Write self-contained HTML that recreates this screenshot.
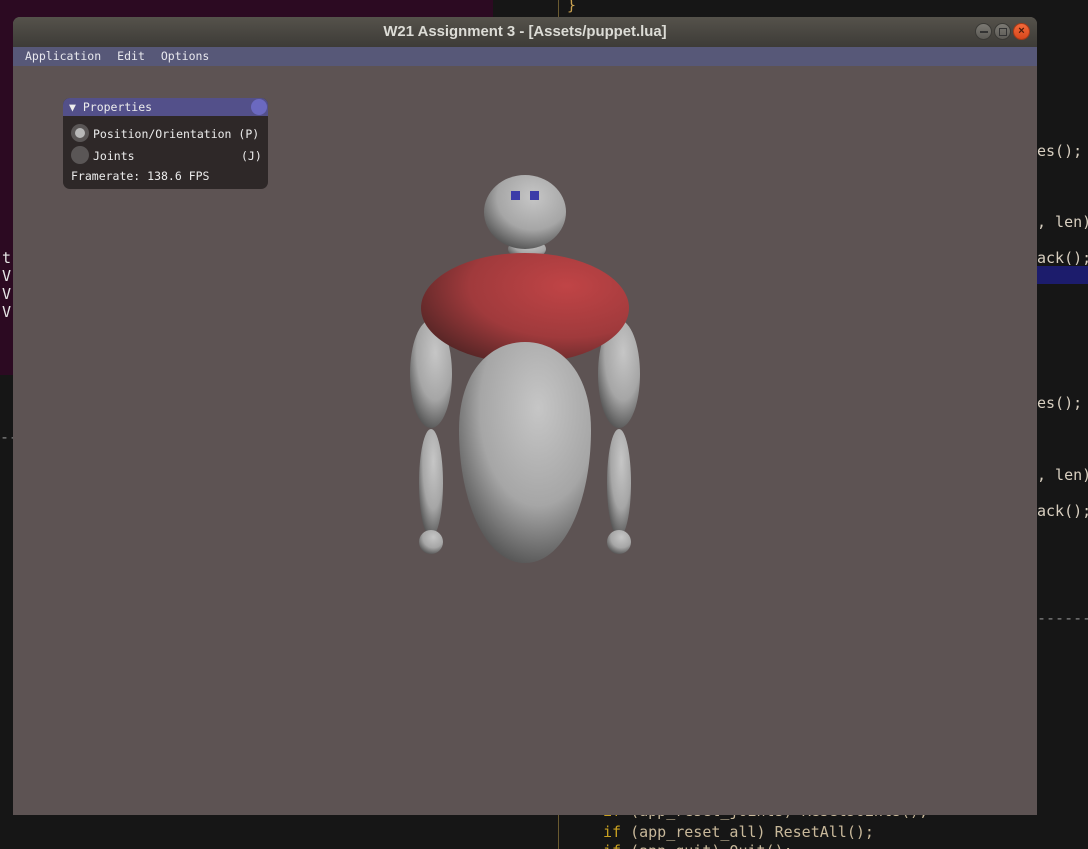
<!DOCTYPE html>
<html><head><meta charset="utf-8">
<style>
*{margin:0;padding:0;box-sizing:border-box}
html,body{width:1088px;height:849px;overflow:hidden}
body{background:#161616;position:relative;font-family:"DejaVu Sans Mono","Liberation Mono",monospace}
.term{position:absolute;left:0;top:0;width:493px;height:375px;background:#2c0a22}
.code{position:absolute;color:#d8cfc0;font-size:15px;white-space:pre;font-family:"DejaVu Sans Mono",monospace}
.win{position:absolute;left:13px;top:17px;width:1024px;height:798px;background:#5d5353;border-radius:7px 7px 0 0;overflow:hidden}
.title{height:30px;background:linear-gradient(#55524b,#3d3b37);color:#dcdcd6;font:bold 14.9px "Liberation Sans",sans-serif;text-align:center;line-height:30px}
.menu{height:19px;background:#575878;color:#e8e8ee;font-size:11.5px;line-height:19px;padding-left:12px}
.menu span{margin-right:16px}
.btn{position:absolute;top:6px;width:17px;height:17px;border-radius:50%;background:linear-gradient(#7b7973,#5c5a55);border:1px solid #3a3935}
.panel{position:absolute;left:50px;top:81px;width:205px;height:91px;background:#2e2828;border-radius:7px;overflow:hidden;color:#ececec;font-size:11.5px}
.ph{height:18px;background:#53508a;line-height:18px;padding-left:6px}
.radio{position:absolute;left:8px;width:18px;height:18px;border-radius:50%;background:#5a5656}
</style></head><body>
<div class="term"></div>
<div class="code" style="left:2px;top:249px;line-height:18px;color:#e6e6e6">t
V
V
V</div>
<div class="code" style="left:0;top:428px;color:#888">--</div>
<div style="position:absolute;left:558px;top:0;width:1px;height:17px;background:#6a5a30"></div>
<div class="code" style="left:567px;top:-4px;color:#c8a050">}</div>
<div class="code" style="left:1037px;top:142px">es();</div>
<div class="code" style="left:1037px;top:213px">, len)</div>
<div style="position:absolute;left:1037px;top:266px;width:51px;height:18px;background:#1c1c6c"></div>
<div class="code" style="left:1037px;top:249px">ack();</div>
<div class="code" style="left:1037px;top:394px">es();</div>
<div class="code" style="left:1037px;top:466px">, len)</div>
<div class="code" style="left:1037px;top:502px">ack();</div>
<div class="code" style="left:1037px;top:609px;color:#888">------</div>
<div style="position:absolute;left:558px;top:815px;width:1px;height:34px;background:#6a5a30"></div>
<div class="code" style="left:603px;top:802px;color:#c8b89a"><span style="color:#c8a020">if</span> (app_reset_joints) ResetJoints();</div>
<div class="code" style="left:603px;top:823px;color:#c8b89a"><span style="color:#c8a020">if</span> (app_reset_all) ResetAll();</div>
<div class="code" style="left:603px;top:842px;color:#c8b89a"><span style="color:#c8a020">if</span> (app_quit) Quit();</div>

<div class="win">
 <div class="title">W21 Assignment 3 - [Assets/puppet.lua]</div>
 <div class="btn" style="left:962px"><div style="position:absolute;left:4px;top:7px;width:8px;height:1.5px;background:#333"></div></div>
 <div class="btn" style="left:981px"><div style="position:absolute;left:4px;top:4px;width:8px;height:8px;border:1.5px solid #333"></div></div>
 <div class="btn" style="left:1000px;background:linear-gradient(#f26a3a,#d9471c);border-color:#a83a18;color:#4a1a0a;font:bold 11px 'Liberation Sans',sans-serif;text-align:center;line-height:15px">×</div>
 <div class="menu"><span>Application</span><span>Edit</span><span>Options</span></div>
 <div class="panel">
  <div class="ph">▼ Properties</div>
  <div style="position:absolute;right:1px;top:1px;width:16px;height:16px;border-radius:50%;background:#6b69c0"></div>
  <div class="radio" style="top:26px"><div style="margin:4px;width:10px;height:10px;border-radius:50%;background:#b8b8b8"></div></div>
  <div style="position:absolute;left:30px;top:29px">Position/Orientation (P)</div>
  <div class="radio" style="top:48px"></div>
  <div style="position:absolute;left:30px;top:51px">Joints</div>
  <div style="position:absolute;left:178px;top:51px">(J)</div>
  <div style="position:absolute;left:8px;top:71px">Framerate: 138.6 FPS</div>
 </div>
</div>

<svg style="position:absolute;left:0;top:0" width="1088" height="849">
<defs>
<radialGradient id="g" cx="0.6" cy="0.3" r="0.8"><stop offset="0" stop-color="#c6c6c6"/><stop offset="0.55" stop-color="#a6a6a6"/><stop offset="1" stop-color="#404040"/></radialGradient>
<radialGradient id="r" cx="0.7" cy="0.3" r="0.85"><stop offset="0" stop-color="#c04446"/><stop offset="0.55" stop-color="#a03a3c"/><stop offset="1" stop-color="#4a2222"/></radialGradient>
</defs>
<ellipse cx="431" cy="483" rx="12" ry="54" fill="url(#g)"/>
<ellipse cx="619" cy="483" rx="12" ry="54" fill="url(#g)"/>
<circle cx="431" cy="542" r="12" fill="url(#g)"/>
<circle cx="619" cy="542" r="12" fill="url(#g)"/>
<ellipse cx="431" cy="374" rx="21" ry="54" fill="url(#g)"/>
<ellipse cx="619" cy="374" rx="21" ry="54" fill="url(#g)"/>
<ellipse cx="527" cy="249" rx="19" ry="10" fill="url(#g)"/>
<ellipse cx="525" cy="308" rx="104" ry="55" fill="url(#r)"/>
<path d="M459 430 C459 372 490 342 525 342 C560 342 591 372 591 430 C591 500 565 563 525 563 C485 563 459 500 459 430Z" fill="url(#g)"/>
<ellipse cx="525" cy="212" rx="41" ry="37" fill="url(#g)"/>
<rect x="511" y="191" width="9" height="9" fill="#3c3ca8"/>
<rect x="530" y="191" width="9" height="9" fill="#3c3ca8"/>
</svg>
</body></html>
